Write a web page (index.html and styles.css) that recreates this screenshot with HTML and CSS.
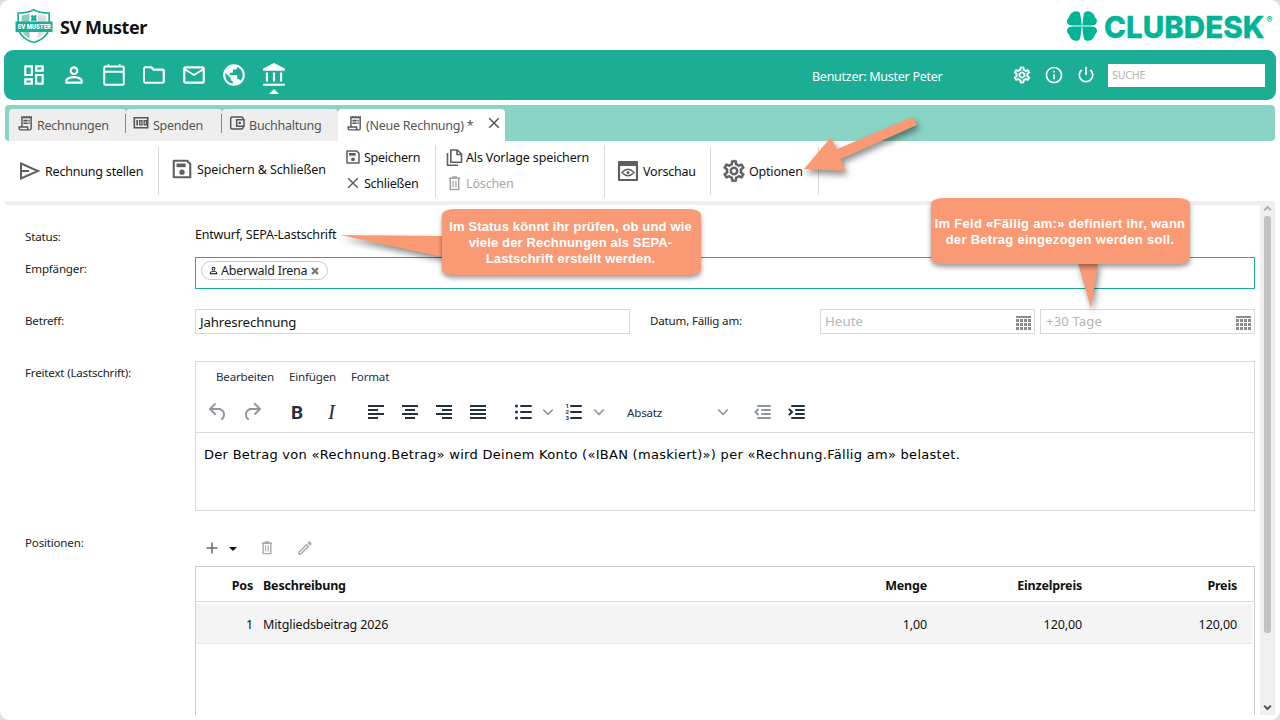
FILE: index.html
```html
<!DOCTYPE html>
<html lang="de">
<head>
    <meta charset="UTF-8">
    <meta name="viewport" content="width=device-width, initial-scale=1.0">
    <title>SV Muster</title>
    <link rel="stylesheet" href="styles.css">
</head>
<body>
    <!-- Shared icons -->
    <svg class="defs">
        <symbol id="receipt" viewBox="0 0 24 24"><path d="M7 16V3.500h13V19a2 2 0 0 1-2 2H5a2 2 0 0 1-2-2v-2h12v2a2 2 0 0 0 2 2" fill="none" stroke="currentColor" stroke-width="2"/><path d="M6 3.500V1.200l1.900 1.500L9.800 1.200l1.900 1.500 1.800-1.500 1.900 1.500 1.900-1.500 1.900 1.500L21 1.200v2.300zM9 6.800h6v2.200H9zM16 6.800h2v2.200h-2zM9 10.500h6v2.200H9zM16 10.500h2v2.200h-2z"/></symbol>
        <symbol id="save" viewBox="0 0 24 24"><path d="M3 3h14.500L21 6.500V21H3z" fill="none" stroke="currentColor" stroke-width="2.300" stroke-linejoin="round"/><path d="M6 6h10v4H6z"/><circle cx="12" cy="15.500" r="2.900"/></symbol>
        <symbol id="trash" viewBox="0 0 14 16"><path d="M1 2.500h12M5 2V1h4v1M2.500 3v11.500h9V3" fill="none" stroke="currentColor" stroke-width="1.600"/><path d="M5.500 5v7M8.500 5v7" stroke="currentColor" stroke-width="1.300"/></symbol>
        <symbol id="cross" viewBox="0 0 12 12"><path d="M1.200 1.200l9.600 9.600M10.800 1.200l-9.600 9.600" stroke="currentColor" stroke-width="1.500"/></symbol>
        <symbol id="person" viewBox="0 0 24 24"><path d="M12 5.900c1.160 0 2.100.94 2.100 2.100s-.94 2.100-2.100 2.100S9.900 9.160 9.900 8s.94-2.100 2.100-2.100m0 9c2.970 0 6.100 1.460 6.100 2.100v1.100H5.900V17c0-.64 3.130-2.100 6.100-2.100M12 4C9.790 4 8 5.790 8 8s1.790 4 4 4 4-1.790 4-4-1.790-4-4-4zm0 9c-2.670 0-8 1.340-8 4v3h16v-3c0-2.660-5.330-4-8-4z"/></symbol>
        <symbol id="gear" viewBox="0 0 24 24"><path d="M19.430 12.980c.04-.32.07-.64.07-.98 0-.34-.03-.66-.07-.98l2.110-1.650c.19-.15.24-.42.12-.64l-2-3.460c-.09-.16-.26-.25-.44-.25-.06 0-.12.01-.17.03l-2.490 1c-.52-.4-1.080-.73-1.690-.98l-.38-2.650C14.460 2.180 14.250 2 14 2h-4c-.25 0-.46.18-.49.42l-.38 2.650c-.61.25-1.170.59-1.690.98l-2.490-1c-.06-.02-.12-.03-.18-.03-.17 0-.34.09-.43.25l-2 3.460c-.13.22-.07.49.12.64l2.110 1.650c-.04.32-.07.65-.07.98 0 .33.03.66.07.98l-2.110 1.650c-.19.15-.24.42-.12.64l2 3.460c.09.16.26.25.44.25.06 0 .12-.01.17-.03l2.490-1c.52.4 1.080.73 1.690.98l.38 2.650c.03.24.24.42.49.42h4c.25 0 .46-.18.49-.42l.38-2.650c.61-.25 1.170-.59 1.690-.98l2.490 1c.06.02.12.03.18.03.17 0 .34-.09.43-.25l2-3.460c.12-.22.07-.49-.12-.64l-2.110-1.650zm-1.980-1.710c.04.31.05.52.05.73 0 .21-.02.43-.05.73l-.14 1.130.89.7 1.080.84-.7 1.210-1.270-.51-1.040-.42-.9.68c-.43.32-.84.56-1.250.73l-1.060.43-.16 1.130-.2 1.350h-1.400l-.19-1.350-.16-1.130-1.060-.43c-.43-.18-.83-.41-1.230-.71l-.91-.7-1.060.43-1.270.51-.7-1.210 1.080-.84.89-.7-.14-1.130c-.03-.31-.05-.54-.05-.74s.02-.43.05-.73l.14-1.130-.89-.7-1.080-.84.7-1.210 1.270.51 1.040.42.9-.68c.43-.32.84-.56 1.250-.73l1.060-.43.16-1.130.2-1.350h1.390l.19 1.350.16 1.130 1.060.43c.43.18.83.41 1.230.71l.91.7 1.060-.43 1.270-.51.7 1.210-1.070.85-.89.7.14 1.130zM12 8c-2.210 0-4 1.790-4 4s1.790 4 4 4 4-1.790 4-4-1.790-4-4-4zm0 6c-1.100 0-2-.9-2-2s.9-2 2-2 2 .9 2 2-.9 2-2 2z" stroke="currentColor" stroke-width=".3"/></symbol>
        <symbol id="datepick" viewBox="0 0 15 14"><path d="M0 0h15v2H0z"/><path d="M0 4.500h15M0 8.500h15M0 12.500h15" stroke="currentColor" stroke-width="3" stroke-dasharray="3 1"/></symbol>
        <symbol id="chevron" viewBox="0 0 12 8"><path d="M1.200 1.500L6 6.300l4.800-4.800" fill="none" stroke="currentColor" stroke-width="1.700"/></symbol>
    </svg>

    <div class="window">
        <header class="header">
            <svg class="club-logo" width="38" height="36" viewBox="0 0 38 36">
                <path d="M18.700 1.700c4 2.300 9 3.300 15.500 3.300v12.500c0 9-6 14-15.500 17C9.200 31.500 3.200 26.500 3.200 17.500V5c6.500 0 11.500-1 15.500-3.300z" fill="#fff" stroke="#1bae94" stroke-width="1.700"/>
                <path d="M6.500 7.500c3-.2 5.500-.8 8-1.800v25C9.500 28 6.500 24 6.500 18z" fill="#8ecabd"/>
                <path d="M23 5.700c2.500 1 5 1.600 8 1.800V18c0 6-3 10-8 12.700z" fill="#ddd"/>
                <path d="M16.500 6.700l2.300 1 2.300-1 .6 2.300-.9 1 .9 1.500-.6 1.800-2.300-.8-2.300.8-.6-1.800.9-1.500-.9-1z" fill="#1bae94"/>
                <path d="M.5 13.500h37v10.500H.5z" fill="#1bae94"/>
                <text x="2.500" y="21" textLength="33.500" lengthAdjust="spacingAndGlyphs" class="club-text">SV MUSTER</text>
            </svg>
            <h1>SV Muster</h1>
            <svg class="brand" width="210" height="40" viewBox="0 0 210 40">
                <g fill="#00b498">
                    <path id="leaf" d="M15.700 20.700C12 19.800 5.500 21.300 2.300 19.200C.4 17.800.6 14 3 12.600C3.600 9.800 5.600 7.300 8.300 6.500C11 5.600 13.600 6.300 14.200 9C14.700 12 15.300 16 15.700 20.700z"/>
                    <use href="#leaf" transform="matrix(-1 0 0 1 32 0)"/>
                    <use href="#leaf" transform="matrix(1 0 0 -1 0 42)"/>
                    <use href="#leaf" transform="matrix(-1 0 0 -1 32 42)"/>
                    <text x="38" y="32.500" textLength="160.500" lengthAdjust="spacingAndGlyphs" class="brand-text">CLUBDESK</text>
                    <text x="200.500" y="17.500" class="brand-reg">®</text>
                </g>
            </svg>
        </header>

        <nav class="nav">
            <div class="nav-main">
                <svg viewBox="0 0 24 24"><path d="M19 5v2h-4V5h4M9 5v6H5V5h4m10 8v6h-4v-6h4M9 17v2H5v-2h4M21 3h-8v6h8V3zM11 3H3v10h8V3zm10 8h-8v10h8V11zm-10 4H3v6h8v-6z"/></svg>
                <svg><use href="#person"/></svg>
                <svg viewBox="0 0 24 24"><path d="M4 4.200h16a1 1 0 0 1 1 1V20a1 1 0 0 1-1 1H4a1 1 0 0 1-1-1V5.200a1 1 0 0 1 1-1zM3 9h18M6.800 2v2.500M17.200 2v2.500" fill="none" stroke="#fff" stroke-width="1.800"/></svg>
                <svg viewBox="0 0 24 24"><path d="M9.170 6l2 2H20v10.300H3.700V5.700h5.170M10 4H4c-1.100 0-1.990.9-1.990 2L2 18c0 1.100.9 2 2 2h16c1.100 0 2-.9 2-2V8c0-1.100-.9-2-2-2h-8l-2-2z"/></svg>
                <svg viewBox="0 0 24 24"><path d="M22 6c0-1.100-.9-2-2-2H4c-1.100 0-2 .9-2 2v12c0 1.100.9 2 2 2h16c1.100 0 2-.9 2-2V6zm-2 0l-8 5-8-5h16zm0 12H4V8l8 5 8-5v10z"/></svg>
                <svg viewBox="0 0 24 24"><path d="M12 2C6.480 2 2 6.480 2 12s4.480 10 10 10 10-4.480 10-10S17.520 2 12 2zm-1 17.930c-3.950-.49-7-3.850-7-7.930 0-.62.08-1.210.21-1.790L9 15v1c0 1.100.9 2 2 2v1.930zm6.900-2.540c-.26-.81-1-1.390-1.900-1.390h-1v-3c0-.55-.45-1-1-1H8v-2h2c.55 0 1-.45 1-1V7h2c1.100 0 2-.9 2-2v-.41c2.930 1.190 5 4.060 5 7.410 0 2.080-.8 3.970-2.100 5.390z"/></svg>
                <span class="nav-active"><svg viewBox="0 0 24 24"><path d="M12 1L22 6v2H2V6zM4.500 9.700h2V18h-2zM11 9.700h2V18h-2zM17.500 9.700h2V18h-2zM2 20h20v2H2z"/></svg></span>
            </div>
            <span class="user">Benutzer: Muster Peter</span>
            <div class="nav-tools">
                <svg><use href="#gear"/></svg>
                <svg viewBox="0 0 24 24"><path d="M11 7h2v2h-2zm0 4h2v6h-2zm1-9C6.480 2 2 6.480 2 12s4.480 10 10 10 10-4.480 10-10S17.520 2 12 2zm0 18c-4.410 0-8-3.590-8-8s3.590-8 8-8 8 3.590 8 8-3.590 8-8 8z"/></svg>
                <svg viewBox="0 0 24 24"><path d="M13 2h-2v10h2V2zm4.830 3.170l-1.420 1.420C17.990 7.860 19 9.810 19 12c0 3.870-3.130 7-7 7s-7-3.130-7-7c0-2.190 1.010-4.140 2.580-5.420L6.170 5.170C4.230 6.820 3 9.260 3 12c0 4.970 4.030 9 9 9s9-4.030 9-9c0-2.740-1.230-5.180-3.170-6.830z"/></svg>
            </div>
            <div class="search">SUCHE</div>
        </nav>

        <div class="tabs">
            <div class="tab tab-1"><svg class="i17"><use href="#receipt"/></svg><span>Rechnungen</span></div>
            <div class="tab tab-2"><svg class="i16" viewBox="0 0 16 16"><path d="M1.300 2.800h13.400v10H1.300z" fill="none" stroke="currentColor" stroke-width="1.600"/><path d="M3.300 5h1.700v5.500H3.300zM6 5h3.600v5.500H6zM10.500 5H14v5.500h-3.500z"/><path d="M7.400 6.300h.9v3h-.9zM11.800 6.300h.9v3h-.9z" fill="#eee"/></svg><span>Spenden</span></div>
            <div class="tab tab-3"><svg class="i16" viewBox="0 0 16 16"><path d="M14 4V3.300A1.500 1.500 0 0 0 12.500 2H3.200A1.500 1.500 0 0 0 1.700 3.400v9.200A1.500 1.500 0 0 0 3.200 14h9.300a1.500 1.500 0 0 0 1.500-1.400V12M7.700 4.800h7.300v6.400H7.700z" fill="none" stroke="currentColor" stroke-width="1.500"/><circle cx="10.800" cy="8" r="1.300"/></svg><span>Buchhaltung</span></div>
            <div class="tab tab-active"><svg class="i17"><use href="#receipt"/></svg><span>(Neue Rechnung) *</span><svg class="tab-close"><use href="#cross"/></svg></div>
        </div>

        <div class="toolbar">
            <div class="tool g1"><svg class="i22" viewBox="0 0 22 22"><path d="M2 3.500L19 11 2 18.500zM2 11h8" fill="none" stroke="currentColor" stroke-width="2"/></svg><span>Rechnung stellen</span></div>
            <div class="tool g2"><svg class="i22"><use href="#save"/></svg><span>Speichern &amp; Schließen</span></div>
            <div class="stack g3">
                <div class="tool"><svg class="i16"><use href="#save"/></svg><span>Speichern</span></div>
                <div class="tool"><svg class="i16 pad"><use href="#cross"/></svg><span>Schließen</span></div>
            </div>
            <div class="stack g4">
                <div class="tool"><svg class="i17" viewBox="0 0 17 17"><path d="M4.800 1h6.500L15.500 5v8.300H4.800zM11 1v4.500h4.500M1.500 4v12.300H12" fill="none" stroke="currentColor" stroke-width="1.600"/></svg><span>Als Vorlage speichern</span></div>
                <div class="tool disabled"><svg class="i17 trash"><use href="#trash"/></svg><span>Löschen</span></div>
            </div>
            <div class="tool g5"><svg class="i22" viewBox="0 0 22 22"><path d="M2 2h18v18H2z" fill="none" stroke="currentColor" stroke-width="2.200" stroke-linejoin="round"/><path d="M2 2h18v4H2z"/><path d="M5 12.500q6-6.500 12 0q-6 6.500-12 0z" fill="none" stroke="currentColor" stroke-width="1.300"/><circle cx="11" cy="12.500" r="1.500"/></svg><span>Vorschau</span></div>
            <div class="tool g6"><svg class="i26"><use href="#gear"/></svg><span>Optionen</span></div>
        </div>

        <main class="content">
            <div class="form">
                <div class="row row-status"><label>Status:</label><div class="plain"><span>Entwurf, SEPA-Lastschrift</span></div></div>
                <div class="row row-recipient">
                    <label>Empfänger:</label>
                    <div class="recipients"><span class="chip"><svg class="chip-icon"><use href="#person"/></svg><span>Aberwald Irena</span><svg class="chip-x" viewBox="0 0 8 8"><path d="M1 1l6 6M7 1L1 7" stroke="#777" stroke-width="2.300"/></svg></span></div>
                </div>
                <div class="row row-subject">
                    <label>Betreff:</label>
                    <div class="field subject"><span>Jahresrechnung</span></div>
                    <label class="date-label">Datum, Fällig am:</label>
                    <div class="field date"><span>Heute</span><svg class="cal"><use href="#datepick"/></svg></div>
                    <div class="field date"><span>+30 Tage</span><svg class="cal"><use href="#datepick"/></svg></div>
                </div>
                <div class="row row-text">
                    <label>Freitext (Lastschrift):</label>
                    <div class="editor">
                        <div class="menubar"><span class="m1">Bearbeiten</span><span class="m2">Einfügen</span><span>Format</span></div>
                        <div class="tools">
                            <svg class="muted" viewBox="0 0 24 24"><path d="M6.400 8H12c3.700 0 6.200 2 6.800 5.100.6 2.700-.4 5.600-2.300 6.800a1 1 0 01-1-1.800c1.100-.6 1.800-2.700 1.400-4.600-.5-2.100-2.100-3.500-4.900-3.500H6.400l3.300 3.300a1 1 0 11-1.400 1.400l-5-5a1 1 0 010-1.400l5-5a1 1 0 011.400 1.400L6.400 8z"/></svg>
                            <svg class="muted redo" viewBox="0 0 24 24"><path d="M17.600 10H12c-2.800 0-4.400 1.400-4.900 3.500-.4 2 .3 4 1.400 4.600a1 1 0 11-1 1.800c-2-1.200-2.900-4.100-2.300-6.800.6-3 3-5.100 6.800-5.100h5.600l-3.300-3.300a1 1 0 111.400-1.400l5 5a1 1 0 010 1.400l-5 5a1 1 0 01-1.400-1.400l3.300-3.300z"/></svg>
                            <span class="bold">B</span>
                            <span class="italic">I</span>
                            <svg class="al" viewBox="0 0 24 24"><path d="M4 6h16M4 10h10M4 14h16M4 18h10"/></svg>
                            <svg class="al" viewBox="0 0 24 24"><path d="M4 6h16M7 10h10M4 14h16M7 18h10"/></svg>
                            <svg class="al" viewBox="0 0 24 24"><path d="M4 6h16M10 10h10M4 14h16M10 18h10"/></svg>
                            <svg class="al" viewBox="0 0 24 24"><path d="M4 6h16M4 10h16M4 14h16M4 18h16"/></svg>
                            <svg class="ln ul" viewBox="0 0 24 24"><path d="M10 6h10M10 12h10M10 18h10"/><circle cx="5.500" cy="6" r="1.500"/><circle cx="5.500" cy="12" r="1.500"/><circle cx="5.500" cy="18" r="1.500"/></svg>
                            <svg class="chev c1"><use href="#chevron"/></svg>
                            <svg class="ln ol" viewBox="0 0 24 24"><path d="M10 6h10M10 12h10M10 18h10"/><text x="4.500" y="8">1</text><text x="4.500" y="14">2</text><text x="4.500" y="20">3</text></svg>
                            <svg class="chev c2"><use href="#chevron"/></svg>
                            <span class="block">Absatz</span>
                            <svg class="chev c3"><use href="#chevron"/></svg>
                            <svg class="ln outdent" viewBox="0 0 24 24"><path d="M7 6h12M11 10h8M11 14h8M7 18h12"/><path d="M7 9.500L4.500 12 7 14.500"/></svg>
                            <svg class="ln indent" viewBox="0 0 24 24"><path d="M7 6h12M11 10h8M11 14h8M7 18h12"/><path d="M4.500 9.500L7 12l-2.500 2.500"/></svg>
                        </div>
                        <div class="text"><span>Der Betrag von «Rechnung.Betrag» wird Deinem Konto («IBAN (maskiert)») per «Rechnung.Fällig am» belastet.</span></div>
                    </div>
                </div>
                <div class="row row-positions">
                    <label>Positionen:</label>
                    <div class="positions">
                        <div class="pos-tools">
                            <svg class="plus" viewBox="0 0 12 12"><path d="M6 .5v11M.5 6h11" stroke="#666" stroke-width="1.500"/></svg>
                            <span class="caret"></span>
                            <svg class="pt"><use href="#trash"/></svg>
                            <svg class="pe" viewBox="0 0 24 24"><path d="M14.060 9.020l.92.92L5.920 19H5v-.92l9.060-9.060M17.660 3c-.25 0-.51.1-.7.29l-1.830 1.830 3.750 3.750 1.830-1.830c.39-.39.39-1.020 0-1.410l-2.340-2.340c-.2-.2-.45-.29-.71-.29zm-3.600 3.190L3 17.250V21h3.750L17.810 9.940l-3.750-3.750z"/></svg>
                        </div>
                        <div class="table">
                            <div class="tr head"><span class="num">Pos</span><span>Beschreibung</span><span class="num">Menge</span><span class="num">Einzelpreis</span><span class="num">Preis</span></div>
                            <div class="tr data"><span class="num">1</span><span>Mitgliedsbeitrag 2026</span><span class="num">1,00</span><span class="num">120,00</span><span class="num">120,00</span></div>
                        </div>
                    </div>
                </div>
            </div>
            <div class="scrollbar">
                <svg width="9" height="7" viewBox="0 0 12 8"><path d="M1.500 6.500L6 2l4.500 4.500" fill="none" stroke="#b0b0b0" stroke-width="2.600"/></svg>
                <div class="thumb"></div>
                <svg width="9" height="7" viewBox="0 0 12 8"><path d="M1.500 1.500L6 6l4.500-4.500" fill="none" stroke="#505050" stroke-width="2.600"/></svg>
            </div>
        </main>
    </div>

    <!-- Annotations -->
    <svg class="overlay" width="1280" height="720" viewBox="0 0 1280 720">
        <path d="M804 169L831 137.300 836.700 149.300 913.300 116.700 916.700 125 840.700 159 845.700 171z"/>
        <path d="M340 235L443 236V257z"/>
        <path d="M1078 263L1091 308 1098 263z"/>
    </svg>
    <div class="callout callout-status"><p>Im Status könnt ihr prüfen, ob und wie<br>viele der Rechnungen als SEPA-<br>Lastschrift erstellt werden.</p></div>
    <div class="callout callout-due"><p>Im Feld «Fällig am:» definiert ihr, wann<br>der Betrag eingezogen werden soll.</p></div>
</body>
</html>
```
FILE: styles.css
```css
* {
    box-sizing: border-box;
}
html, body {
    margin: 0;
    padding: 0;
    height: 720px;
    overflow: hidden;
    background: #d5e0ea;
    font-family: "Noto Sans", "Open Sans", sans-serif;
    font-size: 12.5px;
    letter-spacing: -0.2px;
    color: #111;
    white-space: nowrap;
}
svg {
    display: block;
    flex: none;
    fill: currentColor;
}
.defs {
    position: absolute;
    width: 0;
    height: 0;
}
.window {
    width: 1280px;
    height: 720px;
    background: #fff;
    border-radius: 9px;
    display: flex;
    flex-direction: column;
}

/* Header */
.header {
    height: 50px;
    display: flex;
    align-items: flex-start;
    padding-left: 15px;
    flex: none;
}
.club-logo {
    margin-top: 8px;
}
.club-text {
    font: 900 6.5px Roboto, sans-serif;
    letter-spacing: 0;
    fill: #fff;
}
h1 {
    margin: 15px 0 0 7px;
    font-size: 18px;
    line-height: 25px;
    font-weight: 700;
    letter-spacing: -0.4px;
}
.brand {
    margin: 5px 4px 0 auto;
}
.brand-text {
    font: 800 30.5px Inter, sans-serif;
    letter-spacing: 0;
    stroke: #00b498;
    stroke-width: 0.3;
}
.brand-reg {
    font: bold 9px Inter, sans-serif;
    letter-spacing: 0;
}

/* Green navigation */
.nav {
    height: 50px;
    margin: 0 4px;
    padding-left: 17px;
    flex: none;
    display: flex;
    align-items: center;
    background: #1bae94;
    border-radius: 9px;
    color: #fff;
}
.nav-main {
    display: flex;
    gap: 14px;
    width: 791px;
}
.nav-main svg {
    width: 26px;
    height: 26px;
}
.nav-active {
    position: relative;
}
.nav-active::after {
    content: "";
    position: absolute;
    left: 8px;
    top: 27px;
    border: 5px solid transparent;
    border-top: 0;
    border-bottom-color: #fff;
}
.user {
    width: 200px;
    padding-top: 2px;
    letter-spacing: -0.26px;
}
.nav-tools {
    display: flex;
    gap: 12px;
    width: 96px;
}
.nav-tools svg {
    width: 20px;
    height: 20px;
}
.search {
    width: 157px;
    height: 23px;
    padding-left: 4px;
    background: #fff;
    color: #b5b5b5;
    font-size: 10.7px;
    line-height: 22px;
}

/* Tabs */
.tabs {
    height: 36px;
    margin: 5px 5px 0;
    padding: 4px 0 0 4px;
    flex: none;
    display: flex;
    background: #8ad4c5;
    border-radius: 4px;
    color: #555;
}
.tab {
    height: 32px;
    display: flex;
    padding-left: 8px;
    background: #eee;
    border-radius: 4px 4px 0 0;
    position: relative;
}
.tab svg {
    margin-top: 6px;
}
.tab span {
    margin-left: 3px;
    line-height: 33px;
    letter-spacing: -0.25px;
}
.tab-1 { width: 117px; }
.tab-2 { width: 96px; padding-left: 7px; }
.tab-3 { width: 116px; padding-left: 7px; }
.tab-2 span, .tab-3 span { margin-left: 4px; }
.tab-1::after, .tab-2::after {
    content: "";
    position: absolute;
    right: 0;
    top: 5px;
    height: 19px;
    border-right: 1px solid #888;
}
.tab-active {
    width: 167px;
    background: #fff;
}
.tab .tab-close {
    width: 12px;
    height: 12px;
    margin: 8px 0 0 15px;
}
.i16 { width: 16px; height: 16px; }
.i17 { width: 17px; height: 17px; }
.i22 { width: 22px; height: 22px; }
.i26 { width: 26px; height: 26px; }
.pad { padding: 2px; }
.trash { padding: 1px; }

/* Toolbar */
.toolbar {
    height: 60px;
    margin-left: 5px;
    flex: none;
    display: flex;
    align-items: center;
}
.tool {
    display: flex;
    align-items: center;
}
.tool svg {
    color: #606060;
}
.tool.disabled, .tool.disabled svg {
    color: #a5a5a5;
}
.g1, .g5, .g6 {
    height: 48px;
    border-right: 1px solid #d8d8d8;
}
.g1 { width: 154px; padding-left: 14px; }
.g1 span { margin-left: 4px; }
.g2 { width: 182px; padding-left: 12px; margin-top: -4px; }
.g2 span { margin-left: 4px; letter-spacing: -0.1px; }
.stack {
    height: 52px;
    display: flex;
    flex-direction: column;
    border-right: 1px solid #d8d8d8;
}
.stack .tool {
    height: 26px;
    padding-bottom: 2px;
}
.g3 { padding-left: 4px; width: 95px; }
.g3 span { margin-left: 3px; letter-spacing: -0.25px; }
.g4 { width: 169px; padding-left: 10px; }
.g4 span { margin-left: 3px; letter-spacing: -0.15px; }
.g5 { width: 106px; padding-left: 12px; }
.g5 span { margin-left: 4px; }
.g6 { width: 108px; padding-left: 10px; }
.g6 span { margin-left: 2px; }

/* Form */
.content {
    flex: none;
    height: 514px;
    margin: 0 5px;
    display: flex;
}
.form {
    width: 1255px;
    border-top: 4px solid #eee;
    padding-left: 20px;
    overflow: hidden;
}
.row {
    display: flex;
}
label {
    width: 170px;
    font-size: 11.6px;
    line-height: 16px;
    color: #222;
    flex: none;
}
.row-status { height: 53px; }
.row-status label { padding-top: 24px; }
.plain { line-height: 60px; }
.recipients {
    width: 1060px;
    height: 32px;
    margin-top: -1px;
    padding: 3px 5px;
    border: 1px solid #1bae94;
}
.row-recipient { height: 51px; }
.row-recipient label { padding-top: 3px; }
.chip {
    display: flex;
    align-items: center;
    width: 127px;
    height: 19px;
    padding-left: 6px;
    border: 1px solid #ccc;
    border-radius: 10px;
    letter-spacing: -0.25px;
    color: #222;
}
.chip-icon { width: 11px; height: 11px; color: #000; margin-right: 2px; }
.chip-x { width: 8px; height: 8px; margin-left: 4px; }
.row-subject { height: 52px; }
.row-subject label { padding-top: 4px; }
.field {
    height: 25px;
    border: 1px solid #d8d8d8;
    padding-left: 4px;
    line-height: 24px;
    font-size: 13.2px;
    letter-spacing: -0.1px;
}
.subject { width: 435px; }
.date-label { margin-left: 20px; }
.date {
    width: 215px;
    margin-right: 5px;
    flex: none;
    display: flex;
    justify-content: space-between;
    line-height: 22px;
    letter-spacing: 0.1px;
    color: #b5b5b5;
}
.date:last-child { margin-right: 0; padding-left: 5px; }
.cal {
    width: 15px;
    height: 14px;
    margin: 6px 3px 0 0;
    color: #8c8c8c;
}
.row-text { height: 170px; }
.row-text label { padding-top: 4px; }
.editor {
    width: 1060px;
    height: 150px;
    border: 1px solid #d8d8d8;
}
.menubar {
    height: 32px;
    padding-left: 20px;
    display: flex;
    line-height: 30px;
    font-size: 11.6px;
    color: #222f3e;
}
.menubar span { width: 62px; }
.menubar .m1 { width: 73px; }
.tools {
    height: 39px;
    display: flex;
    align-items: center;
    padding: 0 0 2px 10px;
    border-bottom: 1px solid #d8d8d8;
    color: #222f3e;
}
.tools svg { width: 24px; height: 24px; }
.muted { color: #9096a0; }
.redo { margin-left: 10px; }
.bold {
    width: 14px;
    margin-left: 27px;
    font: bold 19px Roboto, sans-serif;
}
.italic {
    width: 10px;
    margin: 0 26px 0 23px;
    font: italic 21px "Liberation Serif", serif;
}
.al, .ln {
    fill: none;
    stroke: currentColor;
    stroke-width: 2;
}
.ln { stroke-linecap: round; }
.al { margin-right: 10px; }
.ln circle, .ln text { fill: currentColor; stroke: none; }
.ln text { font: bold 6px Roboto, sans-serif; }
.ul { margin-left: 11px; }
.ol { margin-left: 7px; }
.tools .chev { width: 12px; height: 8px; color: #9096a0; }
.c1 { margin-left: 7px; }
.c2 { margin-left: 8px; }
.block {
    width: 68px;
    margin-left: 22px;
    font-size: 11.6px;
}
.c3 { margin-left: 22px; }
.outdent { margin-left: 22px; color: #9096a0; }
.indent { margin-left: 10px; }
.text {
    padding: 14px 0 0 8px;
    font: 13px/16px "DejaVu Sans", sans-serif;
    color: #000;
    letter-spacing: 0.287px;
}

/* Positions */
.row-positions label { padding-top: 4px; }
.positions {
    width: 1060px;
}
.pos-tools {
    height: 35px;
    display: flex;
    align-items: center;
    padding: 0 0 2px 11px;
}
.plus { width: 12px; height: 12px; }
.caret {
    margin: 2px 24px 0 11px;
    border: 4px solid transparent;
    border-bottom: 0;
    border-top-color: #111;
}
.pt { width: 12px; height: 14px; color: #aaa; }
.pe { width: 18px; height: 18px; margin-left: 23px; color: #aaa; }
.table {
    height: 160px;
    border: 1px solid #ccc;
    border-bottom: 0;
}
.tr {
    display: grid;
    grid-template-columns: 57px 580px 94px 155px 155px;
    line-height: 38px;
}
.tr span:nth-child(2) { padding-left: 10px; }
.num { text-align: right; }
.head {
    height: 35px;
    font-weight: 700;
    letter-spacing: -0.2px;
    border-bottom: 1px solid #d8d8d8;
}
.data {
    height: 40px;
    margin: 2px 2px 0 0;
    line-height: 42px;
    background: #f4f4f4;
    border-bottom: 1px solid #e8e8e8;
    letter-spacing: -0.12px;
}

/* Scrollbar */
.scrollbar {
    width: 15px;
    height: 514px;
    padding: 4px 0;
    background: #f0f0f0;
    display: flex;
    flex-direction: column;
    align-items: center;
}
.thumb {
    width: 7px;
    height: 417px;
    margin: 4px 0 auto;
    background: #c1c1c1;
    border-radius: 3px;
}

/* Annotations lie over the page */
.overlay {
    position: absolute;
    left: 0;
    top: 0;
    fill: #fa9a75;
    filter: drop-shadow(2px 4px 3px rgba(0, 0, 0, 0.45));
}
.callout {
    position: absolute;
    width: 259px;
    height: 66px;
    padding-top: 2px;
    display: flex;
    align-items: center;
    justify-content: center;
    background: #fa9a75;
    border-radius: 12px / 6px;
    box-shadow: 0 3px 5px rgba(0, 0, 0, 0.4);
    color: #fff;
    text-align: center;
    font: bold 13px/16px "Liberation Sans", Arial, sans-serif;
    letter-spacing: 0.15px;
}
.callout p { margin: 0; }
.callout-status { left: 442px; top: 209px; padding-right: 2px; }
.callout-due { left: 931px; top: 198px; padding-right: 1px; letter-spacing: 0.29px; }
```
